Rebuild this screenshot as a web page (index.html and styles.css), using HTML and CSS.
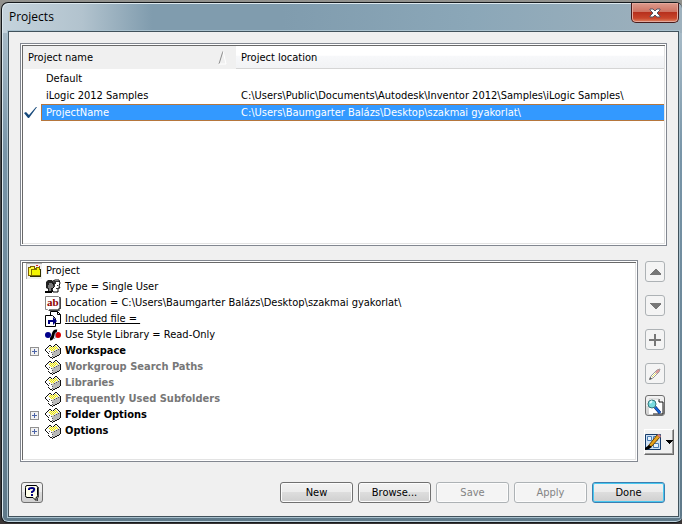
FILE: index.html
```html
<!DOCTYPE html>
<html lang="en">
  <head>
    <meta charset="UTF-8" />
    <meta name="viewport" content="width=device-width, initial-scale=1.0" />
    <title>Projects</title>
    <link rel="stylesheet" href="styles.css">
  </head>
  <body>
    <svg class="defs" aria-hidden="true">
      <symbol id="box" viewBox="0 0 16 16">
        <path d="M1 6 L4 2 L8 3 L11 1 L15 6 V11 L8 15 L4 13 L1 9z" fill="#fff" />
        <path d="M7 9 L15 5 V11 L8 15z" fill="#b8b8b8" />
        <path d="M3 5 L6 3 L8 4 L11 2 L14 5 L7 9z" fill="#f2f2c8" />
        <g shape-rendering="crispEdges">
          <path d="M5 4h1v1h-1z M7 4h1v1h-1z M9 4h1v1h-1z M11 4h1v1h-1z M4 5h1v1h-1z M6 5h1v1h-1z M8 5h1v1h-1z M10 5h1v1h-1z M12 5h1v1h-1z M5 6h1v1h-1z M7 6h1v1h-1z M9 6h1v1h-1z M6 7h1v1h-1z M8 7h1v1h-1z M10 3h1v1h-1z" fill="#f0e800" />
          <path d="M1 5h1v1h-1z M2 4h1v1h-1z M3 3h1v1h-1z M4 2h2v1h-2z M6 3h1v1h-1z M8 3h1v1h-1z M9 2h1v1h-1z M10 1h2v1h-2z M12 2h1v1h-1z M13 3h1v1h-1z M14 4h1v1h-1z M15 5h1v6h-1z M14 11h1v1h-1z M12 12h2v1h-2z M10 13h2v1h-2z M8 14h2v1h-2z M7 15h1v1h-1z M5 14h2v1h-2z M4 13h1v1h-1z M3 12h1v1h-1z M3 10h1v1h-1z M2 9h1v1h-1z M1 8h1v1h-1z M0 6h1v2h-1z" fill="#111" />
          <path d="M4 8h1v1h-1z M6 9h1v1h-1z M7 11h1v1h-1z M7 13h1v1h-1z M9 8h1v1h-1z M11 7h1v1h-1z M13 6h1v1h-1z" fill="#555" />
        </g>
      </symbol>
    </svg>

    <div class="window">
      <div class="titlebar">
        <h1>Projects</h1>
        <button class="close-btn" aria-label="Close">
          <svg width="12" height="10" viewBox="0 0 12 10"><path d="M1 1h3l2 2 2-2h3v1L8 5l3 3v1H8L6 7 4 9H1V8l3-3-3-3z" fill="#fff" stroke="#535666" /></svg>
        </button>
      </div>

      <div class="container">
        <div class="frame list">
          <table>
            <colgroup>
              <col class="mark-col">
              <col class="name-col">
              <col>
            </colgroup>
            <thead>
              <tr>
                <th class="name-head" colspan="2"><div class="sort"><span>Project name</span>
                  <svg width="9" height="14" viewBox="0 0 9 14"><path d="M5 0 L1 13" stroke="#8c8c8c" fill="none" /><path d="M5 0 L8 13 H1" stroke="#fff" fill="none" /></svg></div></th>
                <th class="location">Project location</th>
              </tr>
            </thead>
            <tbody>
              <tr><td class="mark"></td><td class="name">Default</td><td></td></tr>
              <tr><td class="mark"></td><td class="name">iLogic 2012 Samples</td><td>C:\Users\Public\Documents\Autodesk\Inventor 2012\Samples\iLogic Samples\</td></tr>
              <tr class="selected">
                <td class="mark"><svg width="14" height="13" viewBox="0 0 14 13"><path d="M0 7 L2 6 L5 9 L12 1 L13 1 L5 12 L4 12z" fill="#184a7b" /></svg></td>
                <td class="name">ProjectName</td><td>C:\Users\Baumgarter Balázs\Desktop\szakmai gyakorlat\</td>
              </tr>
            </tbody>
          </table>
        </div>

        <div class="details">
          <div class="frame tree">
            <div class="root">
              <svg width="16" height="16" viewBox="0 0 16 16" shape-rendering="crispEdges">
                <path d="M0 0h16v16H0z" fill="#f0f0f0" stroke="#b0b0b0" />
                <path d="M2 4h2V3h4v2h1v7H2z" fill="#ffff40" stroke="#806000" />
                <path d="M5 6h5V4h3v2h1v6H5z" fill="#f4f400" stroke="#807000" />
                <path d="M4 13h10V6" fill="none" stroke="#303000" />
                <path d="M10 2h2v1h-2zM13 3h1v1h-1z" fill="#e02020" />
              </svg>
              <span>Project</span>
            </div>
            <ul>
              <li>
                <svg width="16" height="16" viewBox="0 0 16 16">
                  <path d="M1 3 L3 1 H7 L9 4 L8 9 L9 13 H3 V10 L1 9z" fill="#202020" />
                  <path d="M4 4h3v1h1v4H6v3H4V9H3V6h1z" fill="#777" />
                  <path d="M8 2 L10 1 H14 L15 4 L14 7 L15 9 H13 V13 H8 L7 10 L9 8z" fill="#fff" stroke="#000" />
                  <path d="M9 2h5v1h-3v2h-1v3H9zM12 6h1v1h-1zM11 9h3v1h-3z" fill="#333" />
                  <path d="M0 12h7v2H0z" fill="#000" />
                </svg>
                <span>Type = Single User</span>
              </li>
              <li>
                <svg width="16" height="16" viewBox="0 0 16 16">
                  <path d="M.5 1.5h13l2 2v10h-2v2h-10l-1-1h-2z" fill="#fff" stroke="#888" />
                  <path d="M15 2v12M4 15h11" stroke="#000" fill="none" />
                  <text x="2" y="11" class="ab">ab</text>
                </svg>
                <span>Location = C:\Users\Baumgarter Balázs\Desktop\szakmai gyakorlat\</span>
              </li>
              <li>
                <svg width="16" height="16" viewBox="0 0 16 16">
                  <path d="M5.500 .5h7l3 3v9h-10z" fill="#fff" stroke="#000" />
                  <path d="M12.500 .5v3h3" fill="none" stroke="#000" />
                  <path d="M.5 4.500h7l3 3v8H.5z" fill="#fff" stroke="#000" />
                  <path d="M3 9h5V6l4 4-4 4v-3H5v2H3z" fill="#000080" />
                </svg>
                <a href="#">Included file =&nbsp;</a>
              </li>
              <li>
                <svg width="16" height="16" viewBox="0 0 16 16">
                  <circle cx="3" cy="8" r="3" fill="#00008b" />
                  <circle cx="13" cy="8" r="3" fill="#d80000" />
                  <path d="M12 4 C6 3 10 12 5 12" fill="none" stroke="#000" stroke-width="3" />
                  <path d="M9 12 C12 10 9 7 12 5" fill="none" stroke="#8b9bc0" />
                </svg>
                <span>Use Style Library = Read-Only</span>
              </li>
              <li class="group"><button class="expand" aria-label="Expand Workspace"></button><svg width="16" height="16"><use href="#box" /></svg><span>Workspace</span></li>
              <li class="group empty"><svg width="16" height="16"><use href="#box" /></svg><span>Workgroup Search Paths</span></li>
              <li class="group empty"><svg width="16" height="16"><use href="#box" /></svg><span>Libraries</span></li>
              <li class="group empty"><svg width="16" height="16"><use href="#box" /></svg><span>Frequently Used Subfolders</span></li>
              <li class="group"><button class="expand" aria-label="Expand Folder Options"></button><svg width="16" height="16"><use href="#box" /></svg><span>Folder Options</span></li>
              <li class="group"><button class="expand" aria-label="Expand Options"></button><svg width="16" height="16"><use href="#box" /></svg><span>Options</span></li>
            </ul>
          </div>

          <div class="tools">
            <button class="tool" disabled aria-label="Move up"><svg width="11" height="6" viewBox="0 0 11 6" shape-rendering="crispEdges"><path d="M5 0h1l5 5v1H0V5z" fill="#777" /></svg></button>
            <button class="tool" disabled aria-label="Move down"><svg width="11" height="6" viewBox="0 0 11 6" shape-rendering="crispEdges"><path d="M0 0h11v1L6 6H5L0 1z" fill="#777" /></svg></button>
            <button class="tool" disabled aria-label="Add"><svg width="12" height="12" viewBox="0 0 12 12"><path d="M5 0h2v5h5v2H7v5H5V7H0V5h5z" fill="#777" /></svg></button>
            <button class="tool" disabled aria-label="Edit">
              <svg width="12" height="12" viewBox="0 0 12 12">
                <path d="M1 11 L2 8 L8 2 L11 1 L10 4 L4 10z" fill="#fff" stroke="#999" />
                <path d="M3 9 L7 5" stroke="#e8e060" />
                <path d="M7 5 L10 2" stroke="#d99090" stroke-width="2" />
                <path d="M0 12l1-3 2 2z" fill="#555" />
              </svg>
            </button>
            <button class="tool active" aria-label="Find duplicates">
              <svg width="18" height="18" viewBox="0 0 18 18">
                <path d="M3 2h10l4 4v11H3z" fill="#fff" />
                <path d="M13 2v3h4v12H7" fill="none" stroke="#111" />
                <path d="M3 2h10" stroke="#ccc" />
                <path d="M9 10 L14 16" stroke="#0b1a60" stroke-width="3" />
                <path d="M9 10 L14 16" stroke="#1466d8" stroke-width="2" />
                <circle cx="6" cy="7" r="4" fill="#79dbe0" stroke="#35767a" />
                <path d="M4 6l2-2" stroke="#dffcff" stroke-width="2" />
              </svg>
            </button>
            <button class="tool menu" aria-label="Configure">
              <svg width="17" height="16" viewBox="0 0 17 16">
                <path d="M.5 .5h15v15H.5z" fill="#cfe2f5" stroke="#153a68" />
                <path d="M2.500 2.500h4v4h-4zM8.500 2.500h4v4h-4zM8.500 9.500h5v4h-5z" fill="#e8f2fb" stroke="#4a7db5" />
                <path d="M3 14 L4 11 L12 1 L15 3 L7 12z" fill="#e8a31c" stroke="#6b4200" />
                <path d="M12 1l2-1 2 2-1 2z" fill="#d98080" />
                <path d="M0 16v-2l4-3 3 2-3 2z" fill="#000" />
              </svg>
              <svg width="7" height="4" viewBox="0 0 7 4" shape-rendering="crispEdges"><path d="M0 0h7L4 4H3z" fill="#000" /></svg>
            </button>
          </div>
        </div>

        <div class="footer">
          <button class="tool active help" aria-label="Help">
            <svg width="14" height="16" viewBox="0 0 14 16">
              <path d="M2 .5h9q1.500 0 1.500 2v8q0 2-1.500 2v3l-3-3H2q-1.500 0-1.500-2v-8q0-2 1.500-2z" fill="#ffffe8" stroke="#000" />
              <path d="M13.500 2v10l-1 1v3" fill="none" stroke="#444" />
              <path d="M4 5V4q0-1 3-1t2 2q0 1-2 2v1M6 10h2" fill="none" stroke="#000080" stroke-width="2" />
            </svg>
          </button>
          <button class="btn">New</button>
          <button class="btn">Browse...</button>
          <button class="btn" disabled>Save</button>
          <button class="btn" disabled>Apply</button>
          <button class="btn done">Done</button>
        </div>
      </div>
    </div>
  </body>
</html>
```
FILE: styles.css
```css
* {
  box-sizing: border-box;
}
body {
  margin: 0;
  padding: 2px 0 1px 1px;
  min-height: 100vh;
  display: flex;
  background: linear-gradient(#92928e, #4a4a4a 30%, #3a3636);
  font-family: Tahoma, "DejaVu Sans Condensed", sans-serif;
  font-size: 11px;
  line-height: 16px;
  color: black;
}
svg {
  display: block;
  flex: none;
}
button {
  font: inherit;
  color: black;
  padding: 0;
  margin: 0;
}
.defs {
  display: none;
}
.window {
  flex: 1;
  display: flex;
  flex-direction: column;
  padding: 0 3px 5px 6px;
  border: 1px solid #15191c;
  border-right: none;
  border-radius: 7px 6px 6px 7px;
  background: linear-gradient(90deg, #c5d3dc 0, #b2c3ce 80px, #809cae 150px, #809cae 280px, #8ba7b8 470px, #9eb1bd 100%) top / 100% 30px no-repeat,
    linear-gradient(#b2c3ce, #7895a8 150px, #5f7989 100%);
  box-shadow: inset 1px 1px #dce8ee, inset 0 -1px #bfd4df;
}
.titlebar {
  height: 28px;
  display: flex;
  justify-content: space-between;
  align-items: flex-start;
}
.titlebar h1 {
  margin: 0;
  padding: 5px 0 0 1px;
  font-family: "Segoe UI", "Open Sans", sans-serif;
  font-size: 12px;
  line-height: 17px;
  font-weight: normal;
}
.close-btn {
  width: 48px;
  height: 20px;
  display: flex;
  justify-content: center;
  align-items: center;
  border: 1px solid #481b1b;
  border-top: none;
  border-radius: 0 0 5px 5px;
  box-shadow: inset 0 0 0 1px #e5a99c;
  background: linear-gradient(#dc9b8d, #ce7463 45%, #b7301d 50%, #c8452b 80%, #df8764);
}
.container {
  flex: 1;
  padding: 11px 11px 12px 11px;
  border: 1px solid #41525c;
  background-color: #f0f0f0;
  box-shadow: 0 0 0 1px #a9c1ce;
}
.frame {
  padding: 2px;
  border: 1px solid #828790;
  background-color: white;
  box-shadow: inset 0 0 0 1px white, inset 2px 2px #696969, inset -2px -2px #e3e3e3;
}
.list {
  height: 203px;
}
.list table {
  width: 100%;
  border-collapse: separate;
  border-spacing: 0;
  table-layout: fixed;
}
.mark-col {
  width: 18px;
}
.name-col {
  width: 195px;
}
th {
  height: 23px;
  padding: 0 5px;
  font-weight: normal;
  text-align: left;
}
.name-head {
  padding-right: 9px;
  background-color: #f0f0f0;
}
.sort {
  display: flex;
  justify-content: space-between;
  align-items: center;
}
.location {
  background: linear-gradient(white 40%, #f7f8fa 45%, #f1f2f4);
  box-shadow: inset 0 -1px #d5d5d5;
}
tbody::before {
  content: "";
  display: block;
  height: 1px;
}
td {
  height: 17px;
  padding: 0 5px;
  line-height: 15px;
  white-space: nowrap;
}
.mark {
  padding: 0 1px;
}
.selected td:not(.mark) {
  color: white;
  background-color: #3399ff;
  border-top: 1px solid #b5763c;
  border-bottom: 1px solid #b5763c;
}
.selected .name {
  border-left: 1px solid #b5763c;
  padding-left: 4px;
}
.details {
  display: flex;
  gap: 6px;
  margin: 14px -7px 0 0;
}
.tree {
  flex: 1;
  height: 202px;
  padding: 2px 5px;
}
.root,
.tree li {
  display: flex;
  align-items: center;
  gap: 4px;
  height: 16px;
}
.tree ul {
  margin: 0;
  padding: 0 0 0 19px;
  list-style: none;
}
.tree a {
  color: black;
}
.group {
  font-weight: bold;
}
.tree .empty {
  color: #777;
}
.expand {
  width: 9px;
  height: 9px;
  margin-left: -15px;
  margin-right: 2px;
  border: 1px solid #919191;
  background: linear-gradient(#4b63a7, #4b63a7) center / 5px 1px no-repeat,
    linear-gradient(#4b63a7, #4b63a7) center / 1px 5px no-repeat, #f2f2f2;
}
.ab {
  font: bold 11px "Liberation Serif", serif;
  fill: #900000;
}
.tools {
  width: 30px;
  display: flex;
  flex-direction: column;
  align-items: flex-start;
  gap: 13px;
  padding-top: 1px;
}
.tool {
  width: 20px;
  height: 21px;
  margin-left: 1px;
  display: flex;
  justify-content: center;
  align-items: center;
  border: 1px solid #adb2b5;
  border-radius: 3px;
  background-color: #f4f4f4;
}
.active {
  border-color: #707070;
  background: linear-gradient(#f2f2f2, #ebebeb 50%, #dddddd 50%, #cfcfcf);
}
.tools .active {
  margin-top: -2px;
}
.tool.menu {
  width: 30px;
  height: 26px;
  margin-left: 0;
  gap: 4px;
  border: 1px solid;
  border-color: white #696969 #696969 white;
  border-radius: 0;
  background-color: #f0f0f0;
  box-shadow: inset -1px -1px #a0a0a0;
}
.footer {
  display: flex;
  gap: 5px;
  margin-top: 20px;
  padding-right: 2px;
}
.help {
  width: 22px;
  margin: 0 auto 0 1px;
}
.btn {
  width: 73px;
  height: 21px;
  border: 1px solid #707070;
  border-radius: 3px;
  background: linear-gradient(#f2f2f2, #ebebeb 50%, #dddddd 50%, #cfcfcf);
  box-shadow: inset 0 0 0 1px #fcfcfc;
}
.btn:disabled {
  color: #838383;
  border-color: #adb2b5;
  background: #f4f4f4;
}
.done {
  border-color: #3c7fb1;
  box-shadow: inset 0 0 0 1px #48c8f0;
}
```
